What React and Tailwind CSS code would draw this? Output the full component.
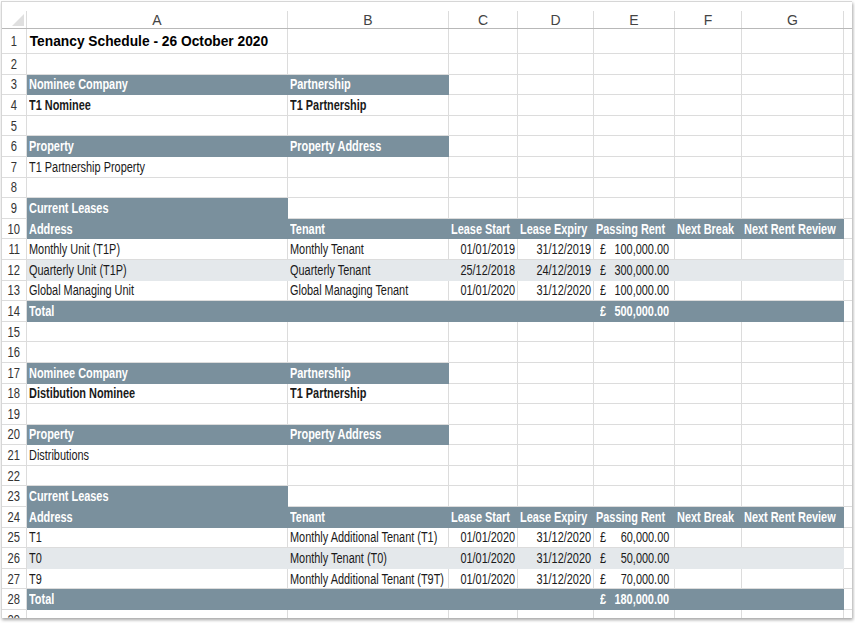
import React from "react";

const COLW = ["w-[261px]", "w-[161px]", "w-[69px]", "w-[76px]", "w-[81px]", "w-[67px]", "w-[102px]"];
const LETTERS = ["A", "B", "C", "D", "E", "F", "G"];
const FONT = "font-['Liberation_Sans',Arial,sans-serif]";

function NL({ children }) {
  return <span className="inline-block origin-left scale-x-[0.78]">{children}</span>;
}
function NR({ children }) {
  return <span className="inline-block origin-right scale-x-[0.78]">{children}</span>;
}

function Money({ v, white }) {
  return (
    <div className={`flex w-full pl-[6px] pr-[5px] ${white ? "font-bold text-white" : ""}`}>
      <NL>£</NL>
      <div className="flex-1 min-w-0 flex justify-end">
        <NR>{v}</NR>
      </div>
    </div>
  );
}

function Cell({ i, kind = "white", children, align = "left", bold = false }) {
  const kindCls =
    kind === "fill"
      ? "bg-[#7a909d] border-[#7a909d] text-white font-bold"
      : kind === "band"
      ? "bg-[#e4e8eb] border-[#e4e8eb] text-[#1a1a1a]"
      : "bg-white border-[#dcdcdc] text-[#1a1a1a]";
  const alignCls =
    align === "right" ? "justify-end pr-[2px]" : align === "none" ? "" : "justify-start pl-[2px]";
  let content = children;
  if (typeof children === "string") {
    content = align === "right" ? <NR>{children}</NR> : <NL>{children}</NL>;
  }
  return (
    <div
      className={`${COLW[i]} shrink-0 h-full border-r border-b flex items-center overflow-visible whitespace-nowrap ${kindCls} ${alignCls} ${bold ? "font-bold" : ""}`}
    >
      {content}
    </div>
  );
}

function Row({ n, h = "h-[20.6px]", children }) {
  return (
    <div className={`flex ${h}`}>
      <div className="w-[25px] shrink-0 h-full border-r border-b border-[#dcdcdc] flex items-center justify-center text-[#333]">
        <span className="inline-block scale-x-[0.8]">{n}</span>
      </div>
      {children}
      <div className="flex-1 h-full border-b border-[#dcdcdc]" />
    </div>
  );
}

function EmptyCells({ from = 0, kind = "white" }) {
  const out = [];
  for (let i = from; i < 7; i++) out.push(<Cell key={i} i={i} kind={kind} />);
  return out;
}

function DataRow({ n, a, b, c, d, e, band }) {
  const k = band ? "band" : "white";
  return (
    <Row n={n}>
      <Cell i={0} kind={k}>{a}</Cell>
      <Cell i={1} kind={k}>{b}</Cell>
      <Cell i={2} kind={k} align="right">{c}</Cell>
      <Cell i={3} kind={k} align="right">{d}</Cell>
      <Cell i={4} kind={k} align="none"><Money v={e} /></Cell>
      <Cell i={5} kind={k} />
      <Cell i={6} kind={k} />
    </Row>
  );
}

function Block({ base, nominee, property, leases, total }) {
  const r = base;
  return (
    <>
      <Row n={r}>
        <Cell i={0} kind="fill">Nominee Company</Cell>
        <Cell i={1} kind="fill">Partnership</Cell>
        <EmptyCells from={2} />
      </Row>
      <Row n={r + 1}>
        <Cell i={0} bold>{nominee}</Cell>
        <Cell i={1} bold>T1 Partnership</Cell>
        <EmptyCells from={2} />
      </Row>
      <Row n={r + 2}>
        <EmptyCells />
      </Row>
      <Row n={r + 3}>
        <Cell i={0} kind="fill">Property</Cell>
        <Cell i={1} kind="fill">Property Address</Cell>
        <EmptyCells from={2} />
      </Row>
      <Row n={r + 4}>
        <Cell i={0}>{property}</Cell>
        <EmptyCells from={1} />
      </Row>
      <Row n={r + 5}>
        <EmptyCells />
      </Row>
      <Row n={r + 6}>
        <Cell i={0} kind="fill">Current Leases</Cell>
        <EmptyCells from={1} />
      </Row>
      <Row n={r + 7}>
        <Cell i={0} kind="fill">Address</Cell>
        <Cell i={1} kind="fill">Tenant</Cell>
        <Cell i={2} kind="fill">Lease Start</Cell>
        <Cell i={3} kind="fill">Lease Expiry</Cell>
        <Cell i={4} kind="fill">Passing Rent</Cell>
        <Cell i={5} kind="fill">Next Break</Cell>
        <Cell i={6} kind="fill">Next Rent Review</Cell>
      </Row>
      {leases.map((l, idx) => (
        <DataRow key={idx} n={r + 8 + idx} band={idx === 1} {...l} />
      ))}
      <Row n={r + 11}>
        <Cell i={0} kind="fill">Total</Cell>
        <Cell i={1} kind="fill" />
        <Cell i={2} kind="fill" />
        <Cell i={3} kind="fill" />
        <Cell i={4} kind="fill" align="none"><Money v={total} white /></Cell>
        <Cell i={5} kind="fill" />
        <Cell i={6} kind="fill" />
      </Row>
    </>
  );
}

export default function App() {
  return (
    <div className={`w-[855px] h-[623px] bg-white relative overflow-hidden ${FONT} text-[14px] leading-none`}>
      <div className="ml-[1px] mt-[1px] w-[851px] h-[617px] border-l border-t border-[#d6d6d6] bg-white overflow-hidden shadow-[1px_2px_3px_rgba(0,0,0,0.35)]">
        <div className="flex h-[27px] pt-[9px] border-b border-[#b8b8b8]">
          <div className="w-[25px] shrink-0 h-full border-r border-[#dcdcdc] relative">
            <div className="absolute right-[2px] bottom-[2px] w-0 h-0 border-l-[12px] border-l-transparent border-b-[12px] border-b-[#dfdfdf]" />
          </div>
          {LETTERS.map((L, i) => (
            <div key={L} className={`${COLW[i]} shrink-0 h-full border-r border-[#dcdcdc] flex items-center justify-center text-[#444] text-[14px]`}>
              {L}
            </div>
          ))}
          <div className="flex-1" />
        </div>
        <Row n={1} h="h-[25px]">
          <Cell i={0} align="none">
            <span className="inline-block origin-left scale-x-[0.9] font-bold text-[15.3px] text-black pl-[3px]">
              Tenancy Schedule - 26 October 2020
            </span>
          </Cell>
          <EmptyCells from={1} />
        </Row>
        <Row n={2}>
          <EmptyCells />
        </Row>
        <Block
          base={3}
          nominee="T1 Nominee"
          property="T1 Partnership Property"
          total="500,000.00"
          leases={[
            { a: "Monthly Unit (T1P)", b: "Monthly Tenant", c: "01/01/2019", d: "31/12/2019", e: "100,000.00" },
            { a: "Quarterly Unit (T1P)", b: "Quarterly Tenant", c: "25/12/2018", d: "24/12/2019", e: "300,000.00" },
            { a: "Global Managing Unit", b: "Global Managing Tenant", c: "01/01/2020", d: "31/12/2020", e: "100,000.00" },
          ]}
        />
        <Row n={15}>
          <EmptyCells />
        </Row>
        <Row n={16}>
          <EmptyCells />
        </Row>
        <Block
          base={17}
          nominee="Distibution Nominee"
          property="Distributions"
          total="180,000.00"
          leases={[
            { a: "T1", b: "Monthly Additional Tenant (T1)", c: "01/01/2020", d: "31/12/2020", e: "60,000.00" },
            { a: "T0", b: "Monthly Tenant (T0)", c: "01/01/2020", d: "31/12/2020", e: "50,000.00" },
            { a: "T9", b: "Monthly Additional Tenant (T9T)", c: "01/01/2020", d: "31/12/2020", e: "70,000.00" },
          ]}
        />
        <Row n={29}>
          <EmptyCells />
        </Row>
      </div>
    </div>
  );
}
